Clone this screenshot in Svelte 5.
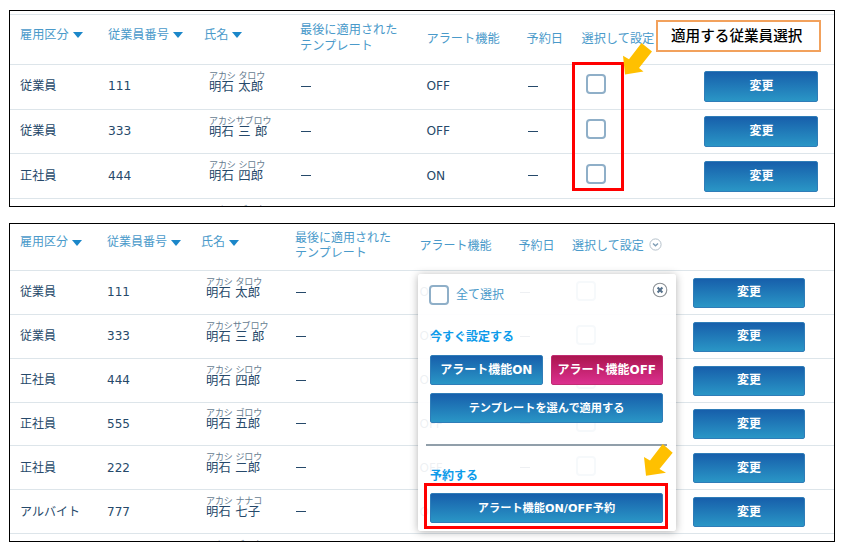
<script lang="ts">
	interface Employee {
		type: string;
		no: string;
		kana: string;
		name: string;
		alert: string;
	}

	const employees: Employee[] = [
		{ type: '従業員', no: '111', kana: 'アカシ タロウ', name: '明石 太郎', alert: 'OFF' },
		{ type: '従業員', no: '333', kana: 'アカシサブロウ', name: '明石 三 郎', alert: 'OFF' },
		{ type: '正社員', no: '444', kana: 'アカシ シロウ', name: '明石 四郎', alert: 'ON' },
		{ type: '正社員', no: '555', kana: 'アカシ ゴロウ', name: '明石 五郎', alert: 'OFF' },
		{ type: '正社員', no: '222', kana: 'アカシ ジロウ', name: '明石 二郎', alert: 'OFF' },
		{ type: 'アルバイト', no: '777', kana: 'アカシ ナナコ', name: '明石 七子', alert: 'OFF' }
	];
	const nextKana = 'アカシ ゴロウ';
</script>

{#snippet sortHead(label: string)}
	<span class="sort">{label}<svg width="10" height="6" viewBox="0 0 10 6"><path d="M0 0h10L5 6z" fill="#1b87c9" /></svg></span>
{/snippet}

{#snippet table(rows: Employee[], hasMenu: boolean)}
	<div class="row head">
		{@render sortHead('雇用区分')}
		{@render sortHead('従業員番号')}
		{@render sortHead('氏名')}
		<span class="two-line">最後に適用された<br />テンプレート</span>
		<span>アラート機能</span>
		<span>予約日</span>
		<span class="pick">
			選択して設定
			{#if hasMenu}
				<svg width="13" height="13" viewBox="0 0 13 13" fill="none">
					<circle cx="6.5" cy="6.5" r="5.6" stroke="#b4c0ca" />
					<path d="M4 5.5l2.5 2.3L9 5.5" stroke="#7f9db5" stroke-width="1.4" />
				</svg>
			{/if}
		</span>
	</div>
	{#each rows as row}
		<div class="row">
			<span>{row.type}</span>
			<span class="no">{row.no}</span>
			<span class="name"><small>{row.kana}</small>{row.name}</span>
			<span class="dash"></span>
			<span>{row.alert}</span>
			<span class="dash"></span>
			<span class="check"></span>
			<button class="btn change">変更</button>
		</div>
	{/each}
	<div class="row">
		<span></span>
		<span></span>
		<span class="name"><small>{nextKana}</small></span>
	</div>
{/snippet}

<main>
	<section class="panel first">
		<div class="clip">{@render table(employees.slice(0, 3), false)}</div>
		<div class="mark mark-checks"></div>
		<div class="callout">適用する従業員選択</div>
		<svg class="arrow arrow-checks" width="30" height="32" viewBox="0 0 30 32">
			<path d="M20.5 0L31 8.5 18 25l4.5 3.5L4 31.5 2 12.7l6 3.6z" fill="#ffc000" />
		</svg>
	</section>

	<section class="panel second">
		<div class="clip">{@render table(employees, true)}</div>
		<div class="popup">
			<div class="all">
				<span class="check"></span>
				<span>全て選択</span>
				<svg class="close" width="16" height="16" viewBox="0 0 16 16" fill="none">
					<circle cx="8" cy="8" r="6.8" stroke="#8a8f94" stroke-width="1.1" />
					<path d="M5.6 5.6l4.8 4.8M10.4 5.6l-4.8 4.8" stroke="#56718b" stroke-width="2.1" />
				</svg>
			</div>
			<h4>今すぐ設定する</h4>
			<div class="pair">
				<button class="btn">アラート機能ON</button>
				<button class="btn pink">アラート機能OFF</button>
			</div>
			<button class="btn wide">テンプレートを選んで適用する</button>
			<hr />
			<h4 class="reserve">予約する</h4>
			<button class="btn wide">アラート機能ON/OFF予約</button>
		</div>
		<div class="mark mark-reserve"></div>
		<svg class="arrow arrow-reserve" width="30" height="32" viewBox="0 0 30 32">
			<path d="M19.7 0L29.7 8.7 16.5 25l6.5 3.7L3 31.7 1 13l6 3.6z" fill="#ffc000" />
		</svg>
	</section>
</main>

<style>
	:global(body) {
		background: #fff;
	}

	main {
		display: flex;
		flex-direction: column;
		gap: 16px;
		width: 826px;
		padding: 10px 0 0 9px;
		font-family: 'DejaVu Sans', 'Noto Sans CJK JP', sans-serif;
		font-size: 12px;
		line-height: 15px;
		color: #26496a;
	}

	.panel {
		position: relative;
		box-sizing: border-box;
		border: 1px solid #000;
	}

	.first {
		--cols: 88px 96px 96px 126.5px 100px 55px 122.9px 114px;
		--row: 44.7px;
		--head: 51px;
		--btn-h: 31px;
		--check-shift: -5px;
		height: 197px;
		font-size: 12.2px;
	}

	.second {
		--cols: 87px 94px 94px 124.5px 99px 53.5px 121px 112px;
		--row: 43.85px;
		--head: 47px;
		--btn-h: 30px;
		--check-shift: -4px;
		height: 319px;
	}

	.clip {
		height: 100%;
		overflow: hidden;
	}

	.first .clip {
		box-sizing: border-box;
		padding-top: 3px;
	}

	.row {
		display: grid;
		grid-template-columns: var(--cols);
		align-items: center;
		box-sizing: border-box;
		height: var(--row);
		padding-left: 10px;
		border-bottom: 1px solid #dde5ea;
		white-space: nowrap;
	}

	.second .row {
		padding-top: 1px;
	}

	.row.head {
		height: var(--head);
		padding-top: 0;
		padding-bottom: 1px;
		color: #4a9aca;
	}

	.first .head {
		border-top: 1px solid #dde5ea;
	}

	.sort {
		display: flex;
		align-items: center;
		gap: 4px;
		padding-bottom: 8px;
	}

	.two-line {
		padding-bottom: 1px;
		line-height: 15.5px;
	}

	.pick {
		display: flex;
		align-items: center;
		gap: 5px;
	}

	.pick svg {
		margin-top: -4px;
	}

	.name {
		display: flex;
		flex-direction: column;
		min-height: 23px;
		padding-left: 5px;
		margin-top: -9px;
		font-size: 12.3px;
		line-height: 13px;
		letter-spacing: 0.25px;
	}

	.name small {
		font-size: 9px;
		line-height: 10px;
		letter-spacing: -0.1px;
		color: #667c90;
	}

	.dash {
		width: 10px;
		height: 1px;
		margin: -1px 0 0 1px;
		background: #26496a;
	}

	.check {
		box-sizing: border-box;
		width: 20px;
		height: 20px;
		margin: var(--check-shift) 0 0 4px;
		border: 2px solid #8fafc8;
		border-radius: 4px;
		background: #fff;
	}

	.btn {
		box-sizing: border-box;
		height: var(--btn-h);
		padding: 0;
		border: 1px solid #2f7db8;
		border-radius: 2px;
		background: linear-gradient(#175fab, #2a96c6);
		color: #fff;
		font: bold 12px/15px 'DejaVu Sans', 'Noto Sans CJK JP', sans-serif;
		white-space: nowrap;
	}

	.btn.pink {
		border-color: #c12c73;
		background: linear-gradient(#ab164f, #dc308f);
	}

	.popup {
		position: absolute;
		left: 408px;
		top: 50px;
		display: flex;
		flex-direction: column;
		box-sizing: border-box;
		width: 258px;
		height: 257px;
		padding: 11px 13px 0 12px;
		border-radius: 3px;
		background: rgba(255, 255, 255, 0.92);
		box-shadow: 0 1px 8px rgba(0, 0, 0, 0.3);
	}

	.all {
		display: flex;
		align-items: center;
		gap: 7px;
		height: 20px;
		color: #4a9aca;
	}

	.all .check {
		margin: 0 0 0 -1px;
	}

	.close {
		margin: -11px -5px 0 auto;
	}

	h4 {
		margin: 25px 0 10px;
		font-size: 12px;
		line-height: 15px;
		color: #0d9bea;
	}

	.pair {
		display: grid;
		grid-template-columns: 1fr 1fr;
		gap: 8px;
		margin-bottom: 8px;
	}

	.popup .btn {
		flex: none;
	}

	.popup .wide {
		font-size: 11.2px;
	}

	hr {
		width: 241px;
		height: 2px;
		margin: 21px -4px 0;
		border: 0;
		background: #919faa;
	}

	.reserve {
		margin: 23px 0 9px;
	}

	.mark {
		position: absolute;
		box-sizing: border-box;
		border: 3px solid #f00;
	}

	.mark-checks {
		left: 562px;
		top: 51px;
		width: 52px;
		height: 129px;
	}

	.mark-reserve {
		left: 414px;
		top: 259px;
		width: 244px;
		height: 46px;
	}

	.callout {
		position: absolute;
		left: 646px;
		top: 9px;
		box-sizing: border-box;
		width: 165px;
		height: 32px;
		padding-left: 13px;
		border: 2px solid #f2a15c;
		background: #fff;
		color: #000;
		font-size: 14.6px;
		font-weight: 500;
		line-height: 28px;
		white-space: nowrap;
	}

	.arrow {
		position: absolute;
		overflow: visible;
	}

	.arrow-checks {
		left: 611px;
		top: 32px;
	}

	.arrow-reserve {
		left: 633px;
		top: 220px;
	}
</style>
